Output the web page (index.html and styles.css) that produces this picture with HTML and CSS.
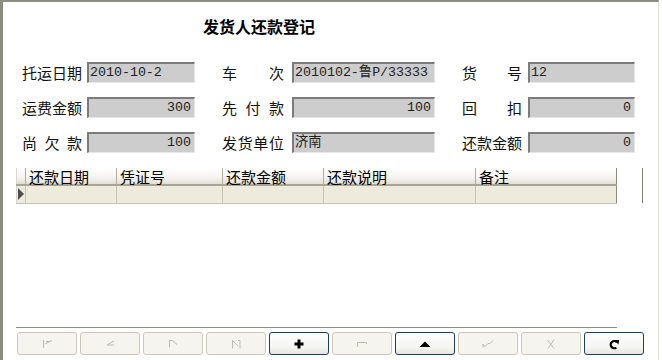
FILE: index.html
```html
<!DOCTYPE html>
<html lang="zh-CN">
<head>
  <meta charset="UTF-8">
  <meta name="viewport" content="width=device-width, initial-scale=1.0">
  <title>发货人还款登记</title>
  <link rel="stylesheet" href="styles.css">
</head>
<body>

  <div class="window">
    <div class="title">发货人还款登记</div>

    <!-- 表单 -->
    <div class="form">
      <div class="label">托运日期</div>
      <div class="field f1">2010-10-2</div>
      <div class="label l2">车次</div>
      <div class="field f2">2010102-鲁P/33333</div>
      <div class="label">货号</div>
      <div class="field f3">12</div>

      <div class="label">运费金额</div>
      <div class="field f1 num">300</div>
      <div class="label l2">先付款</div>
      <div class="field f2 num">100</div>
      <div class="label">回扣</div>
      <div class="field f3 num">0</div>

      <div class="label">尚欠款</div>
      <div class="field f1 num">100</div>
      <div class="label l2">发货单位</div>
      <div class="field f2">济南</div>
      <div class="label">还款金额</div>
      <div class="field f3 num">0</div>
    </div>

    <!-- 还款明细 -->
    <div class="grid-area">
      <div class="grid">
        <div class="grid-head">
          <div class="cell ind"></div>
          <div class="cell c1">还款日期</div>
          <div class="cell c2">凭证号</div>
          <div class="cell c3">还款金额</div>
          <div class="cell c4">还款说明</div>
          <div class="cell c5">备注</div>
        </div>
        <div class="grid-row">
          <div class="cell ind"><span class="arrow"></span></div>
          <div class="cell c1"></div>
          <div class="cell c2"></div>
          <div class="cell c3"></div>
          <div class="cell c4"></div>
          <div class="cell c5"></div>
        </div>
      </div>
      <div class="grid-edge"></div>
    </div>

    <div class="divider"></div>

    <!-- 导航按钮 -->
    <div class="toolbar">
      <div class="btn off"><svg width="14" height="12" viewBox="0 0 14 12"><path d="M3.5 2v8M12 2.5L5 6M6 3.5h4" /></svg></div>
      <div class="btn off"><svg width="14" height="12" viewBox="0 0 14 12"><path d="M11 3L4 7h7" /></svg></div>
      <div class="btn off"><svg width="14" height="12" viewBox="0 0 14 12"><path d="M3.5 2.5v7M3.5 2.5h3L11 6.5" /></svg></div>
      <div class="btn off"><svg width="14" height="12" viewBox="0 0 14 12"><path d="M3.5 2.5v8M3.5 2.5L9 8M11 2.5v8M9 2.5h2" /></svg></div>
      <div class="btn on"><svg width="12" height="12" viewBox="0 0 12 12"><path class="solid" d="M4.5 1.5h3v3h3v3h-3v3h-3v-3h-3v-3h3z" /></svg></div>
      <div class="btn off"><svg width="14" height="12" viewBox="0 0 14 12"><path d="M2.5 9V4.5h9V6" /></svg></div>
      <div class="btn on"><svg width="14" height="10" viewBox="0 0 14 10"><path class="solid" d="M1.5 8L7 2.5 12.5 8z" /></svg></div>
      <div class="btn off"><svg width="16" height="12" viewBox="0 0 16 12"><path d="M3 9.5V6l2 2.5 3-3 2 0 3-3" /></svg></div>
      <div class="btn off"><svg width="14" height="12" viewBox="0 0 14 12"><path d="M3.5 2l6.5 8.5M10 1.5L4 10.5" /></svg></div>
      <div class="btn on"><svg width="12" height="12" viewBox="0 0 12 12"><path class="bold" d="M9 4.3A3.6 3.6 0 1 0 8.3 9.6" /><path class="solid" d="M6.8 2.2L11.2 2 10.4 6.6z" /></svg></div>
    </div>
  </div>

</body>
</html>
```

FILE: styles.css
```css
/* Reset some default styles */
* {
  margin: 0;
  padding: 0;
  box-sizing: border-box;
}

body {
  font-family: "Noto Sans CJK SC", "Liberation Sans", sans-serif;
  background: #fff;
  color: #000;
  width: 662px;
  height: 360px;
  overflow: hidden;
}

/* Window frame */
.window {
  width: 659px;
  height: 360px;
  border-top: 2px solid #8c8c80;
  border-left: 3px solid #8c8c80;
  border-right: 1px solid #e2e2dc;
  display: flex;
  flex-direction: column;
  padding-bottom: 5px;
}

.title {
  width: 512px;
  padding-top: 12px;
  line-height: 24px;
  text-align: center;
  font-size: 16px;
  font-weight: bold;
}

/* Form */
.form {
  margin-top: 24px;
  padding-left: 19px;
  display: grid;
  grid-template-columns: 65px 135px 70px 170px 66px 107px;
  grid-auto-rows: 21px;
  row-gap: 14px;
}

.label {
  width: 60px;
  font-size: 15px;
  line-height: 21px;
  text-align: justify;
  text-align-last: justify;
  color: #111;
}

.label.l2 {
  width: 62px;
}

.field {
  height: 21px;
  background: #cdcdcd;
  border-top: 2px solid #7c7c7c;
  border-left: 2px solid #7c7c7c;
  border-right: 1px solid #e8e8e8;
  border-bottom: 1px solid #e8e8e8;
  font-family: "Liberation Mono", "Noto Sans CJK SC", monospace;
  font-size: 13.3px;
  line-height: 18px;
  padding: 0 3px 0 1px;
  white-space: nowrap;
  overflow: hidden;
  color: #222;
}

.field.f1 { width: 108px; }
.field.f2 { width: 143px; }
.field.f3 { width: 107px; }

.field.num {
  text-align: right;
}

/* Grid */
.grid-area {
  flex: 1;
  margin-top: 15px;
  padding-left: 13px;
  display: flex;
  align-items: flex-start;
}

.grid {
  width: 601px;
}

.grid-head,
.grid-row {
  display: flex;
  height: 18px;
}

.grid-head {
  background: linear-gradient(to bottom, #ffffff, #f4f3ee 60%, #e2e0d4);
  border-bottom: 2px solid #a8a698;
}

.grid-row {
  background: #eeebdc;
  border-bottom: 1px solid #c8c5b6;
}

.cell {
  height: 100%;
  border-right: 1px solid #c6c3b4;
  font-size: 15px;
  line-height: 17px;
  padding-left: 3px;
  white-space: nowrap;
}

.grid-head .cell {
  border-right-color: #b0ae9e;
}

.cell.ind { width: 10px; padding: 0; border-left: 1px solid #d8d6ca; }
.cell.c1 { width: 91px; }
.cell.c2 { width: 106px; }
.cell.c3 { width: 101px; }
.cell.c4 { width: 152px; }
.cell.c5 { width: 141px; border-right-color: #8c8a7c; }

.arrow {
  display: block;
  width: 0;
  height: 0;
  margin: 2px 0 0 1px;
  border-top: 6px solid transparent;
  border-bottom: 6px solid transparent;
  border-left: 6px solid #505050;
}

.grid-edge {
  width: 1px;
  height: 35px;
  margin-left: 25px;
  background: #7c7c74;
}

.divider {
  margin-left: 13px;
  width: 601px;
  border-top: 1px solid #8c8c86;
}

/* Toolbar buttons */
.toolbar {
  margin-top: 4px;
  padding-left: 14px;
  display: flex;
  gap: 3px;
}

.btn {
  width: 60px;
  height: 23px;
  border-radius: 3px;
  display: flex;
  align-items: center;
  justify-content: center;
}

.btn.off {
  background: #f5f4ee;
  border: 1px solid #cbc8ba;
}

.btn.on {
  background: linear-gradient(to bottom, #ffffff, #f4f4f0 70%, #e6e4dc);
  border: 1px solid #1c3c6c;
}

.btn svg path {
  fill: none;
  stroke: #bdbbae;
  stroke-width: 1;
}

.btn svg path.solid {
  fill: #000;
  stroke: none;
}

.btn svg path.bold {
  stroke: #000;
  stroke-width: 2.2;
}
```
